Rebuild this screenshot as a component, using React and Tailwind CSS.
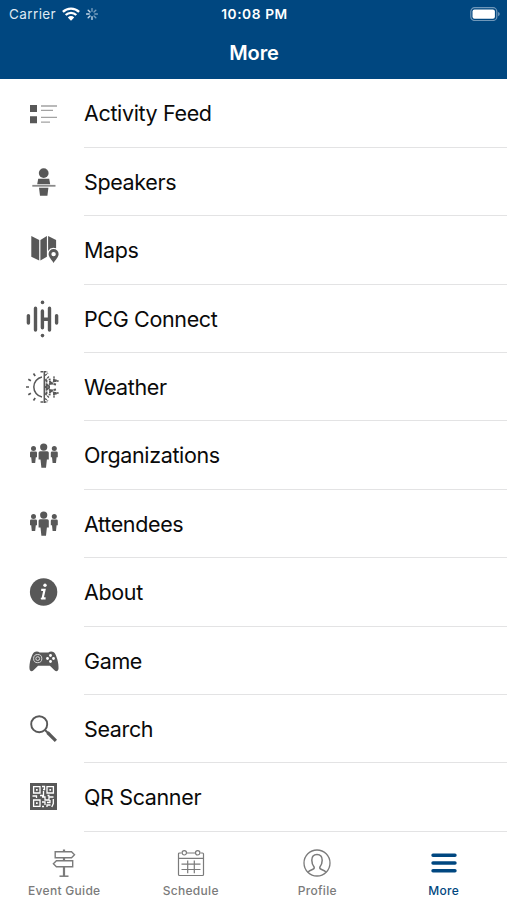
/*
 * App.jsx
 * "More" screen of the event app: status bar, title, menu list and tab bar.
 */

// Menu icons share a 36x36 grid
function MenuIcon({ children }) {
    return (
        <svg viewBox="0 0 36 36" className="w-9 h-9 shrink-0 overflow-visible text-[#585858]" fill="currentColor">
            {children}
        </svg>
    );
}

function FeedIcon() {
    return (
        <MenuIcon>
            <path d="M5 9h7v7H5zM5 20.3h7v7H5z" />
            <path d="M16 10h16M16 14.4h12M16 21.4h16M16 26.2h9" stroke="#a3a3a3" strokeWidth="1.3" />
        </MenuIcon>
    );
}

function SpeakerIcon() {
    return (
        <MenuIcon>
            <circle cx="18.7" cy="9.1" r="4.9" />
            <path d="M13.2 14.8h11l1 5.4h-13zM14 23.8h9.4l-1 8h-7.4z" />
            <path d="M7.3 21.8h23.2" stroke="#8a8a8a" strokeWidth="1.8" />
        </MenuIcon>
    );
}

function MapsIcon() {
    return (
        <MenuIcon>
            <path d="M6.3 4l7.9 4v20.5l-7.9-3.8zM15.4 8l6.5-4v20.8l-6.5 3.7zM23.1 4l8 4v8.3a6.6 6.6 0 0 0-8 2.6z" />
            <path
                fillRule="evenodd"
                d="M28.6 17.1a5 5 0 0 0-5 5c0 3.2 3.3 6 5 8.9 1.7-2.9 5-5.7 5-8.9a5 5 0 0 0-5-5zm0 2.8a2.2 2.2 0 1 1 0 4.4 2.2 2.2 0 0 1 0-4.4z"
            />
        </MenuIcon>
    );
}

function ConnectIcon() {
    return (
        <MenuIcon>
            <circle cx="17.5" cy="1.4" r="1.8" />
            <circle cx="17.5" cy="34.6" r="1.8" />
            <path
                d="M3.4 14.6v7.5M10.5 7.3v21.8M17.4 10v16.8M24.5 7.3v21.8M31.6 14.6v7.5M17.4 18.2h7.1"
                stroke="currentColor"
                strokeWidth="3.4"
                strokeLinecap="round"
            />
        </MenuIcon>
    );
}

function WeatherIcon() {
    return (
        <MenuIcon>
            <g fill="none" stroke="currentColor">
                {/* Sun half */}
                <path d="M17 8a10.2 10.2 0 0 0 0 20" strokeWidth="1.5" />
                <path d="M1 18h3M3.3 10.3l2.6 1.5M8.5 4.6l1.7 2.5M3.3 25.7l2.6-1.5M8.5 31.4l1.7-2.5" strokeWidth="1.7" />
                {/* Divider */}
                <path d="M15.5 2.8h7M15.5 33h7" strokeWidth="1.6" strokeDasharray="2.6 .8" />
                <path d="M19.3 2v32" strokeWidth="1.5" />
                {/* Snowflake half */}
                <path d="M20 18l12-7.5M20 18l12 7.5" strokeWidth="1.8" strokeDasharray="4 .8" />
                <path d="M20 11.5l4-4M20 24.5l4 4M20 6.5l3-2.5M20 29.5l3 2.5" strokeWidth="1.3" strokeDasharray="2.4 .8" />
                <path d="M25.3 14.5l-.8-4.8M25.3 14.5l6 1M29 12V7.500M29 12h4.500M25.300 21.500l-.8 4.800M25.300 21.500l6-1M29 24v4.500M29 24h4.500" strokeWidth="1.9" strokeDasharray="2.600 .6" />
                <path d="M21.500 11v4.500l3 1.500M21.500 25v-4.500l3-1.500M20 18h5" strokeWidth="1.900" strokeDasharray="2.500 .7" />
            </g>
        </MenuIcon>
    );
}

function PeopleIcon() {
    return (
        <MenuIcon>
            <circle cx="18.7" cy="9.1" r="3.6" />
            <path d="M15.2 13.2h7q1.6 0 1.6 1.6v6.8h-1.9l-.9 8.1h-4.6l-.9-8.1h-1.900v-6.800q0-1.600 1.600-1.600z" />
            <circle cx="8.5" cy="10.4" r="2.5" />
            <path d="M6.3 13.4h4.4q1.3 0 1.3 1.3v4.6h-1.2l-.6 5.6H6.8l-.6-5.600H5v-4.600q0-1.300 1.300-1.300z" />
            <circle cx="29.3" cy="10.4" r="2.5" />
            <path d="M27.1 13.4h4.4q1.3 0 1.3 1.3v4.6h-1.2l-.6 5.6h-3.4l-.6-5.6h-1.2v-4.6q0-1.3 1.3-1.3z" />
        </MenuIcon>
    );
}

function AboutIcon() {
    return (
        <MenuIcon>
            <circle cx="18.6" cy="18" r="13.7" />
            <circle cx="20" cy="11.3" r="1.7" fill="#fff" />
            <path d="M16.2 15.9h3.300l-1.900 8.400h3" fill="none" stroke="#fff" strokeWidth="2.2" />
            <path d="M15.8 24.5h2" stroke="#fff" strokeWidth="1.4" />
        </MenuIcon>
    );
}

function GameIcon() {
    return (
        <MenuIcon>
            <path d="M9.2 9.2c1.5-.9 4.2-.9 5.4.3h8.8c1.2-1.2 3.9-1.2 5.4-.3 2.8 2 5.2 12 4.7 16.6-.2 2.6-2.3 3-4 1.5l-4.6-4.6H13.1l-4.6 4.6c-1.7 1.5-3.8 1.1-4-1.5C4 21.2 6.4 11.200 9.200 9.200z" />
            <g fill="none" stroke="#e4e4e4">
                <circle cx="12.7" cy="15.6" r="4.1" strokeWidth=".9" />
                <circle cx="12.7" cy="15.6" r="1.9" strokeWidth=".9" />
            </g>
            <g fill="#fff">
                <circle cx="25.5" cy="12.5" r="1.4" />
                <circle cx="25.5" cy="18.5" r="1.4" />
                <circle cx="22.5" cy="15.5" r="1.4" />
                <circle cx="28.5" cy="15.5" r="1.4" />
            </g>
        </MenuIcon>
    );
}

function SearchIcon() {
    return (
        <MenuIcon>
            <g fill="none" stroke="currentColor">
                <circle cx="14.2" cy="13.2" r="8" strokeWidth="1.9" />
                <path d="M20 19l3 3" strokeWidth="2" />
                <path d="M22.5 21.5l8.4 8.3" strokeWidth="3.2" />
            </g>
        </MenuIcon>
    );
}

function QrIcon() {
    return (
        <MenuIcon>
            <path d="M5 4h27v27H5z" />
            <g fill="none" stroke="#fff" strokeWidth="1.3">
                <path d="M8.6 7.6H15V14H8.6zM22 7.6h6.4V14H22zM8.6 21H15v6.4H8.6z" />
                <path d="M17 7.5h2.5v3H18M18.5 12v4.5H15M7.5 17h4v2M17 18h3v3h4v-3h4.5M22.5 16.5h2M17 23h3v3M22 23.5h3V21M17 27.500h2M22 28v-2h3.500M28.300 20v4.500l-1.500 3.500" />
            </g>
            <path d="M11 10h1.7v1.700H11zM24.400 10h1.700v1.700h-1.700zM11 23.300h1.700V25H11z" fill="#fff" />
        </MenuIcon>
    );
}

function TabIcon({ children }) {
    return (
        <svg viewBox="0 0 30 30" className="w-[30px] h-[30px]" fill="none" stroke="currentColor" strokeWidth="1.2">
            {children}
        </svg>
    );
}

function GuideIcon() {
    return (
        <TabIcon>
            <path d="M6.2 3.8h16.3l3 3-3 3H6.2zM23.7 12.800H7.400l-3 3 3 3h16.300z" strokeWidth="1.4" />
            <path d="M15 1.5v2M15 10v2.6M15 19v9" strokeWidth="2.2" />
            <path d="M10.5 28.2h9" strokeWidth="1.5" />
        </TabIcon>
    );
}

function ScheduleIcon() {
    return (
        <TabIcon>
            <path d="M5.5 5h-2q-1 0-1 1v20.500q0 1 1 1h23q1 0 1-1V6q0-1-1-1h-2M11 5h8M2.500 10.300h25" />
            <circle cx="8.3" cy="4.8" r="2.2" />
            <circle cx="21.7" cy="4.8" r="2.2" />
            <path d="M5.5 16.2h19M5.5 21.5h19M11.7 12.5v12.7M18.3 12.5v12.7" />
        </TabIcon>
    );
}

function ProfileIcon() {
    return (
        <TabIcon>
            <circle cx="15" cy="15" r="13" strokeWidth="1.3" />
            <path
                d="M6 24.3c.7-1.6 2.3-2.1 4.8-3 1.3-.5 1.7-1.2 1.3-2.4-1.5-1.8-2.3-4-2.3-6.6 0-3.6 1.9-5.8 5.2-5.8s5.2 2.2 5.2 5.8c0 2.6-.8 4.8-2.3 6.6-.4 1.200 0 1.900 1.300 2.400 2.500.9 4.100 1.400 4.800 3"
                strokeWidth="1.5"
            />
        </TabIcon>
    );
}

function MoreIcon() {
    return (
        <TabIcon>
            <path d="M4 7.2h22M4 15h22M4 22.7h22" strokeWidth="3.4" strokeLinecap="round" />
        </TabIcon>
    );
}

const menuItems = [
    { label: 'Activity Feed', icon: FeedIcon },
    { label: 'Speakers', icon: SpeakerIcon },
    { label: 'Maps', icon: MapsIcon },
    { label: 'PCG Connect', icon: ConnectIcon },
    { label: 'Weather', icon: WeatherIcon },
    { label: 'Organizations', icon: PeopleIcon },
    { label: 'Attendees', icon: PeopleIcon },
    { label: 'About', icon: AboutIcon },
    { label: 'Game', icon: GameIcon },
    { label: 'Search', icon: SearchIcon },
    { label: 'QR Scanner', icon: QrIcon }
];

const tabs = [
    { label: 'Event Guide', icon: GuideIcon },
    { label: 'Schedule', icon: ScheduleIcon },
    { label: 'Profile', icon: ProfileIcon },
    { label: 'More', icon: MoreIcon }
];

function StatusBar() {
    return (
        <div className="grid grid-cols-3 items-center h-[27px] pl-[9px] pr-[7px] text-[13.5px]">
            <div className="flex items-center text-[#dfe9f2]">
                <span className="pt-px tracking-[0.4px]">Carrier</span>
                <svg viewBox="0 0 18 14" className="w-[18px] h-[14px] ml-[6px]" fill="none" stroke="#fff" strokeWidth="2.3">
                    <path d="M.9 4.9a11.5 11.5 0 0 1 16.2 0M3.7 8a7.5 7.5 0 0 1 10.6 0" />
                    <path d="M9 13.7l3.2-3.3a4.5 4.5 0 0 0-6.4 0z" fill="#fff" stroke="none" />
                </svg>
                <svg viewBox="0 0 12 12" className="w-3 h-3 ml-[6px]" stroke="#c3d6e6" strokeWidth="1.4" strokeLinecap="round">
                    <path d="M6 .6v2.6M9.8 2.2L8 4M11.4 6H8.800M9.800 9.800L8 8" opacity=".6" />
                    <path d="M6 11.4V8.8M2.2 9.8L4 8M.6 6h2.600M2.200 2.200L4 4" />
                </svg>
            </div>
            <span className="pt-px text-center text-[13.7px] font-semibold text-white tracking-[0.6px]">10:08 PM</span>
            <svg viewBox="0 0 31 14" className="w-[31px] h-[14px] justify-self-end">
                <rect x="1.8" y=".7" width="26" height="12.8" rx="3.8" fill="none" stroke="#6f97b9" strokeWidth="1.2" />
                <rect x="3.5" y="2.4" width="22.4" height="9.400" rx="2" fill="#fff" />
                <path d="M29.2 5v4.2q1.500-.5 1.500-2.100T29.200 5z" fill="#7fa2c0" />
            </svg>
        </div>
    );
}

export default function App() {
    const currentTab = 'More';

    return (
        <div className="flex flex-col w-full h-[900px] overflow-hidden bg-white font-['Inter','Liberation_Sans',sans-serif]">
            {/* Header */}
            <header className="h-[79.4px] shrink-0 bg-[#004780]">
                <StatusBar />
                <h1 className="pl-px text-center text-[20px] leading-[52px] font-semibold tracking-[-0.1px] text-white">More</h1>
            </header>

            {/* Menu */}
            <main className="shrink-0">
                {menuItems.map((item) => {
                    const Icon = item.icon;
                    return (
                        <div key={item.label} className="flex items-center h-[68.4px] pl-[25px]">
                            <Icon />
                            <div className="flex items-center flex-1 h-full pt-px ml-[23px] border-b border-[#e3e3e4] text-[21.5px] tracking-[-0.36px] text-[#0a0a0a]">
                                {item.label}
                            </div>
                        </div>
                    );
                })}
            </main>

            {/* Tab bar */}
            <nav className="grid grid-cols-4 flex-1 pt-[16.500px] pl-px">
                {tabs.map((tab) => {
                    const Icon = tab.icon;
                    return (
                        <div
                            key={tab.label}
                            className={`flex flex-col items-center gap-[5px] ${tab.label === currentTab ? 'text-[#004780]' : 'text-[#7b7b7b]'}`}
                        >
                            <Icon />
                            <span className="text-[12px] leading-[16px] font-medium tracking-[0.3px]">{tab.label}</span>
                        </div>
                    );
                })}
            </nav>
        </div>
    );
}
